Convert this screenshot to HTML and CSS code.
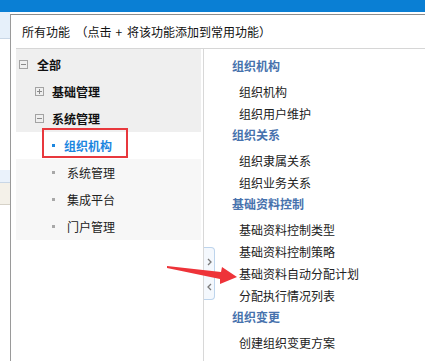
FILE: index.html
```html
<!DOCTYPE html>
<html lang="zh-CN">
<head>
    <meta charset="UTF-8">
    <meta name="viewport" content="width=device-width, initial-scale=1.0">
    <title>所有功能</title>
    <link rel="stylesheet" href="styles.css">
</head>
<body>

<div class="topbar"></div>

<div class="stage">
    <div class="backdrop">
        <div class="bd-top"></div>
        <div class="bd-gap"></div>
        <div class="bd-blue"></div>
        <div class="bd-beige"></div>
    </div>

    <div class="dialog">
        <div class="dialog-head">所有功能 &nbsp;（点击<span class="plus-sign">+</span>将该功能添加到常用功能）</div>

        <div class="dialog-body">
            <div class="tree">
                <div class="tree-group">
                    <div class="row lv1"><span class="toggle minus"></span>全部</div>
                    <div class="row lv2"><span class="toggle plus"></span>基础管理</div>
                    <div class="row lv2"><span class="toggle minus"></span>系统管理</div>
                </div>
                <div class="row lv3 active"><span class="dot"></span>组织机构<span class="mark"></span></div>
                <div class="tree-sub">
                    <div class="row leaf"><span class="dot"></span>系统管理</div>
                    <div class="row leaf"><span class="dot"></span>集成平台</div>
                    <div class="row leaf"><span class="dot"></span>门户管理</div>
                </div>
            </div>

            <div class="menu">
                <div class="group">
                    <div class="group-title">组织机构</div>
                    <div class="item">组织机构</div>
                    <div class="item">组织用户维护</div>
                </div>
                <div class="group">
                    <div class="group-title">组织关系</div>
                    <div class="item">组织隶属关系</div>
                    <div class="item">组织业务关系</div>
                </div>
                <div class="group">
                    <div class="group-title">基础资料控制</div>
                    <div class="item">基础资料控制类型</div>
                    <div class="item">基础资料控制策略</div>
                    <div class="item">基础资料自动分配计划</div>
                    <div class="item">分配执行情况列表</div>
                </div>
                <div class="group">
                    <div class="group-title">组织变更</div>
                    <div class="item">创建组织变更方案</div>
                </div>
            </div>

            <!-- collapse handle sits on the divider -->
            <div class="handle">
                <svg width="11" height="53" viewBox="0 0 11 53">
                    <polyline points="4,12 7,15 4,18" fill="none" stroke="#7a7a7a" stroke-width="1.3"/>
                    <polyline points="7,37 4,40 7,43" fill="none" stroke="#7a7a7a" stroke-width="1.3"/>
                </svg>
            </div>
        </div>
    </div>
</div>

<svg class="pointer" width="425" height="361" viewBox="0 0 425 361">
    <polygon points="167,266 221,272 222,267 237,277 220,284 220,279 167,268" fill="#ee3339"/>
</svg>

</body>
</html>
```

FILE: styles.css
```css
body {
    margin: 0;
    font-family: "Noto Sans CJK SC", "Liberation Sans", sans-serif;
    font-size: 12px;
    color: #222;
    background: #fff;
    width: 425px;
    height: 361px;
    overflow: hidden;
    position: relative;
}

.topbar {
    height: 12px;
    background-color: #0a7fd4;
}

.stage {
    display: flex;
    height: 349px;
}

/* page behind the dialog */
.backdrop {
    width: 10px;
    flex-shrink: 0;
}

.bd-top {
    height: 26px;
    background-color: #e6f0fa;
    border-bottom: 1px solid #c9d7e6;
}

.bd-gap {
    height: 131px;
}

.bd-blue {
    height: 12px;
    background-color: #eaf2fb;
    border-bottom: 1px solid #c9d7e6;
}

.bd-beige {
    height: 21px;
    background-color: #f4f1e9;
    border-bottom: 1px solid #d6d2c8;
}

.dialog {
    flex: 1;
    margin-top: 2px;
    border-top: 1px solid #8c8c8c;
    border-left: 1px solid #9a9a9a;
    display: flex;
    flex-direction: column;
}

.dialog-head {
    margin-left: 5px;
    padding-left: 6px;
    height: 33px;
    line-height: 33px;
    border-bottom: 1px solid #d6d6d6;
    color: #111;
    white-space: nowrap;
}

.plus-sign {
    margin: 0 5px 0 4px;
}

.dialog-body {
    flex: 1;
    display: flex;
    position: relative;
}

/* left tree */
.tree {
    width: 185px;
    margin-left: 5px;
    margin-right: 2px;
    flex-shrink: 0;
}

.tree-group {
    background-color: #efefef;
    padding-top: 2px;
}

.tree-sub {
    background-color: #f7f7f7;
}

.row {
    height: 27px;
    display: flex;
    align-items: center;
    white-space: nowrap;
}

.lv1 {
    padding-left: 3px;
    font-weight: bold;
    color: #111;
}

.lv1 .toggle {
    margin-right: 9px;
}

.lv2 {
    padding-left: 19px;
    font-weight: bold;
    color: #111;
}

.lv2 .toggle {
    margin-right: 8px;
}

.toggle {
    width: 7px;
    height: 7px;
    border: 1px solid #a3a3a3;
    position: relative;
    flex-shrink: 0;
}

.toggle::before {
    content: "";
    position: absolute;
    left: 1px;
    top: 3px;
    width: 5px;
    height: 1px;
    background-color: #8a8a8a;
}

.plus::after {
    content: "";
    position: absolute;
    left: 3px;
    top: 1px;
    width: 1px;
    height: 5px;
    background-color: #8a8a8a;
}

.dot {
    width: 3px;
    height: 3px;
    flex-shrink: 0;
}

.active {
    position: relative;
    padding-left: 36px;
    font-weight: bold;
    color: #1c86df;
    background: #fff;
}

.active .dot {
    background-color: #1c86df;
    margin-right: 9px;
}

.mark {
    position: absolute;
    left: 26px;
    top: -4px;
    width: 86px;
    height: 30px;
    box-sizing: border-box;
    border: 2px solid #e8383d;
}

.leaf {
    padding-left: 36px;
    color: #222;
}

.leaf .dot {
    background-color: #a8a8a8;
    margin-right: 12px;
}

/* right list */
.menu {
    flex: 1;
    border-left: 1px solid #d8d8d8;
    padding-top: 7px;
    padding-left: 28px;
    white-space: nowrap;
}

.group {
    margin-bottom: 0;
}

.group-title {
    height: 20px;
    line-height: 20px;
    margin-bottom: 5px;
    font-weight: bold;
    color: #4772ad;
}

.item {
    height: 22px;
    line-height: 22px;
    padding-left: 7px;
    color: #222;
}

.handle {
    position: absolute;
    left: 193px;
    top: 198px;
    width: 11px;
    height: 53px;
    box-sizing: border-box;
    border: 1px solid #bdd4ec;
    border-left: none;
    border-radius: 0 4px 4px 0;
    background-color: #f4f8fd;
}

.handle svg {
    display: block;
    margin-top: -1px;
}

.pointer {
    position: absolute;
    left: 0;
    top: 0;
    pointer-events: none;
}
```
